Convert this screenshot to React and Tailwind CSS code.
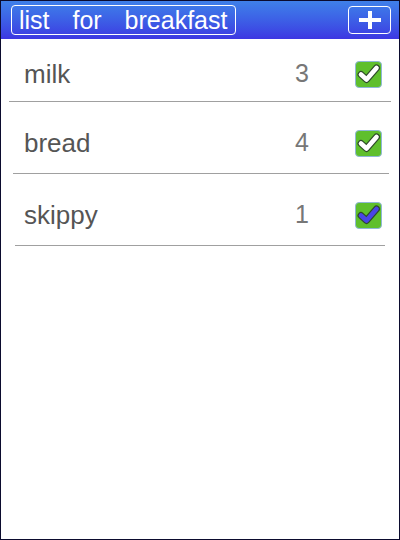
import React from 'react';

const items = [
  { name: 'milk', qty: 3, check: 'white', wrap: 'pt-[8px] h-[62px]', line: 'mx-[8px]' },
  { name: 'bread', qty: 4, check: 'white', wrap: 'pt-[11px] h-[71px]', line: 'ml-[12px] mr-[10px]' },
  { name: 'skippy', qty: 1, check: 'blue', wrap: 'pt-[11px] h-[71px]', line: 'ml-[14px] mr-[14px]' },
];

const CheckBox = ({ tone }) => (
  <div className="w-[27px] h-[27px] rounded-[4px] bg-[#5fbf2c] border border-[#8fb7d6] flex items-center justify-center">
    <svg width="24" height="22" viewBox="0 0 24 22">
      <path
        d="M4 11.5 L9.5 16.5 L19.5 5"
        fill="none"
        stroke="#2e4a2a"
        strokeWidth="7"
        strokeLinecap="round"
        strokeLinejoin="round"
      />
      <path
        d="M4 11.5 L9.5 16.5 L19.5 5"
        fill="none"
        stroke={tone === 'blue' ? '#4a45e6' : '#ffffff'}
        strokeWidth="4.6"
        strokeLinecap="round"
        strokeLinejoin="round"
      />
    </svg>
  </div>
);

export default function App() {
  return (
    <div className="w-[400px] h-[540px] border border-[#0b0b2e] bg-white flex flex-col font-['Liberation_Sans',Arial,sans-serif]">
      <header className="h-[38px] shrink-0 bg-gradient-to-b from-[#3f80e9] to-[#3d36e2] flex items-center justify-between pl-[10px] pr-[8px]">
        <div className="h-[30px] pl-[7px] pr-[8px] border border-white rounded-[4px] flex items-center text-white text-[25px] leading-none [word-spacing:16px]">
          list for breakfast
        </div>
        <button className="w-[43px] h-[28px] border border-white rounded-[4px] flex items-center justify-center">
          <svg width="28" height="18" viewBox="0 0 28 18">
            <rect x="3" y="7" width="22" height="4" fill="white" />
            <rect x="12" y="0" width="4" height="18" fill="white" />
          </svg>
        </button>
      </header>

      <main className="flex flex-col">
        {items.map((it) => (
          <div key={it.name}>
            <div className={`flex items-center pl-[23px] ${it.wrap}`}>
              <span className="flex-1 text-[26px] text-[#555555]">{it.name}</span>
              <span className="w-[20px] text-center text-[25px] text-[#777777]">{it.qty}</span>
              <div className="ml-[43px] mr-[17px]">
                <CheckBox tone={it.check} />
              </div>
            </div>
            <div className={`h-px bg-[#a0a0a0] ${it.line}`} />
          </div>
        ))}
      </main>
    </div>
  );
}
